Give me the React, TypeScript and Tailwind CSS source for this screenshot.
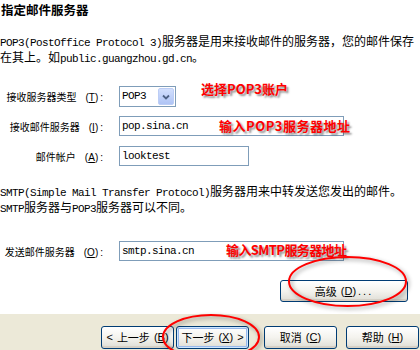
import React from "react";

const cjk = "font-['Noto_Sans_CJK_SC',sans-serif]";

function M({ children }: { children: React.ReactNode }) {
  return (
    <span className="font-['Liberation_Mono',monospace] text-[11px] tracking-[-0.6px]">
      {children}
    </span>
  );
}

function Key({ k, gap }: { k: string; gap?: string }) {
  return (
    <span className={`font-['Liberation_Sans',sans-serif] ${gap ?? "ml-[4px]"}`}>
      (<span className="underline">{k}</span>)
    </span>
  );
}

function Label({ text, k }: { text: string; k: string }) {
  return (
    <div className="w-[103px] flex justify-end shrink-0 translate-y-[1px]">
      <span className={`${cjk} text-[10px] leading-[14px] whitespace-nowrap text-black`}>
        {text}
        <Key k={k} gap="ml-[9px]" />
        <span className="font-['Liberation_Sans',sans-serif] ml-[2px]">:</span>
      </span>
    </div>
  );
}

function Annot({ children, className }: { children: React.ReactNode; className: string }) {
  return (
    <div
      className={`absolute ${cjk} text-[13px] leading-[15px] font-bold text-[#FF0000] whitespace-nowrap [text-shadow:2px_2px_2px_rgba(0,0,0,0.45)] ${className}`}
    >
      {children}
    </div>
  );
}

function XPButton({
  children,
  def,
  className,
}: {
  children: React.ReactNode;
  def?: boolean;
  className?: string;
}) {
  return (
    <div
      className={`h-[23px] rounded-[3px] border border-[#003C74] bg-linear-to-b from-white via-[#F4F3EE] to-[#DEDDD5] flex items-center justify-center ${cjk} text-[11px] text-black whitespace-nowrap ${
        def ? "shadow-[inset_0_0_0_1px_#CEE7FF,inset_0_0_0_2px_#98B8EA]" : "shadow-[inset_0_-2px_0_#D6D0C5]"
      } ${className ?? ""}`}
    >
      {children}
    </div>
  );
}

export default function App() {
  return (
    <div className="relative w-[420px] h-[350px] overflow-hidden bg-white flex flex-col text-black">
      <div className="h-[314px] bg-white flex flex-col">
        <div className={`${cjk} text-[12.5px] leading-[20px] font-bold pl-[1px] h-[20px]`}>指定邮件服务器</div>

        <div className={`${cjk} mt-[14px] text-[12px] leading-[13px] whitespace-nowrap`}>
          <M>POP3(PostOffice Protocol 3)</M>服务器是用来接收邮件的服务器，您的邮件保存
          <br />
          在其上。如<M>public.guangzhou.gd.cn</M>。
        </div>

        <div className="relative mt-[20px] h-[21px] flex items-center">
          <Label text="接收服务器类型" k="T" />
          <div className="ml-[16px] w-[57px] h-[21px] border border-[#7F9DB9] bg-white flex items-center pl-[2px] pr-[1px]">
            <M>POP3</M>
            <div className="ml-auto w-[16px] h-[17px] rounded-[2px] border border-[#BCCDF5] bg-linear-to-b from-[#D2DFFD] to-[#AFC4F5] flex items-center justify-center">
              <svg width="8" height="6" viewBox="0 0 8 6">
                <path d="M1 1.5 L4 4.5 L7 1.5" stroke="#4D6185" strokeWidth="1.8" fill="none" />
              </svg>
            </div>
          </div>
          <Annot className="left-[201px] top-[-5px]">选择POP3账户</Annot>
        </div>

        <div className="relative mt-[9px] h-[20px] flex items-center">
          <Label text="接收邮件服务器" k="I" />
          <div className="ml-[16px] w-[225px] h-[20px] border border-[#7F9DB9] bg-white flex items-center pl-[2px]">
            <M>pop.sina.cn</M>
          </div>
          <Annot className="left-[219px] top-[2px] tracking-[0.5px]">输入POP3服务器地址</Annot>
        </div>

        <div className="relative mt-[10px] h-[20px] flex items-center">
          <Label text="邮件帐户" k="A" />
          <div className="ml-[16px] w-[130px] h-[20px] border border-[#7F9DB9] bg-white flex items-center pl-[2px]">
            <M>looktest</M>
          </div>
        </div>

        <div className={`${cjk} mt-[18px] text-[12px] leading-[13px] whitespace-nowrap`}>
          <M>SMTP(Simple Mail Transfer Protocol)</M>服务器用来中转发送您发出的邮件。
          <br />
          <M>SMTP</M>服务器与<M>POP3</M>服务器可以不同。
        </div>

        <div className="relative mt-[25px] h-[20px] flex items-center">
          <Label text="发送邮件服务器" k="O" />
          <div className="ml-[16px] w-[225px] h-[20px] border border-[#7F9DB9] bg-white flex items-center pl-[2px]">
            <M>smtp.sina.cn</M>
          </div>
          <Annot className="left-[226px] top-[1px] tracking-[-0.6px]">输入SMTP服务器地址</Annot>
        </div>

        <div className="mt-[19px] flex justify-end pr-[12px]">
          <XPButton className="w-[128px] !h-[22px]">
            高级<Key k="D" />
            <span className="font-['Liberation_Sans',sans-serif] tracking-[2px] ml-[2px]">...</span>
          </XPButton>
        </div>
      </div>

      <div className="flex-1 bg-[#ECE9D8] flex items-start pt-[12px] pl-[101px]">
        <XPButton className="w-[73px]">
          <span className="font-['Liberation_Sans',sans-serif] mr-[4px]">&lt;</span>上一步
          <Key k="B" />
        </XPButton>
        <XPButton def className="w-[73px] ml-[2px]">
          下一步
          <Key k="X" />
          <span className="font-['Liberation_Sans',sans-serif] ml-[4px]">&gt;</span>
        </XPButton>
        <XPButton className="w-[73px] ml-[15px]">
          取消
          <Key k="C" />
        </XPButton>
        <XPButton className="w-[73px] ml-[9px]">
          帮助
          <Key k="H" />
        </XPButton>
      </div>

      <svg
        className="absolute left-[284px] top-[252px] [filter:drop-shadow(2px_2px_2px_rgba(0,0,0,0.4))]"
        width="128"
        height="60"
        viewBox="0 0 128 60"
      >
        <ellipse cx="63.5" cy="29.5" rx="58.5" ry="24.5" stroke="#FF0000" strokeWidth="2" fill="none" />
      </svg>
      <svg
        className="absolute left-[158px] top-[310px] [filter:drop-shadow(2px_2px_2px_rgba(0,0,0,0.4))]"
        width="110"
        height="60"
        viewBox="0 0 110 60"
      >
        <ellipse cx="53" cy="27" rx="48" ry="22" stroke="#FF0000" strokeWidth="2" fill="none" />
      </svg>
    </div>
  );
}
